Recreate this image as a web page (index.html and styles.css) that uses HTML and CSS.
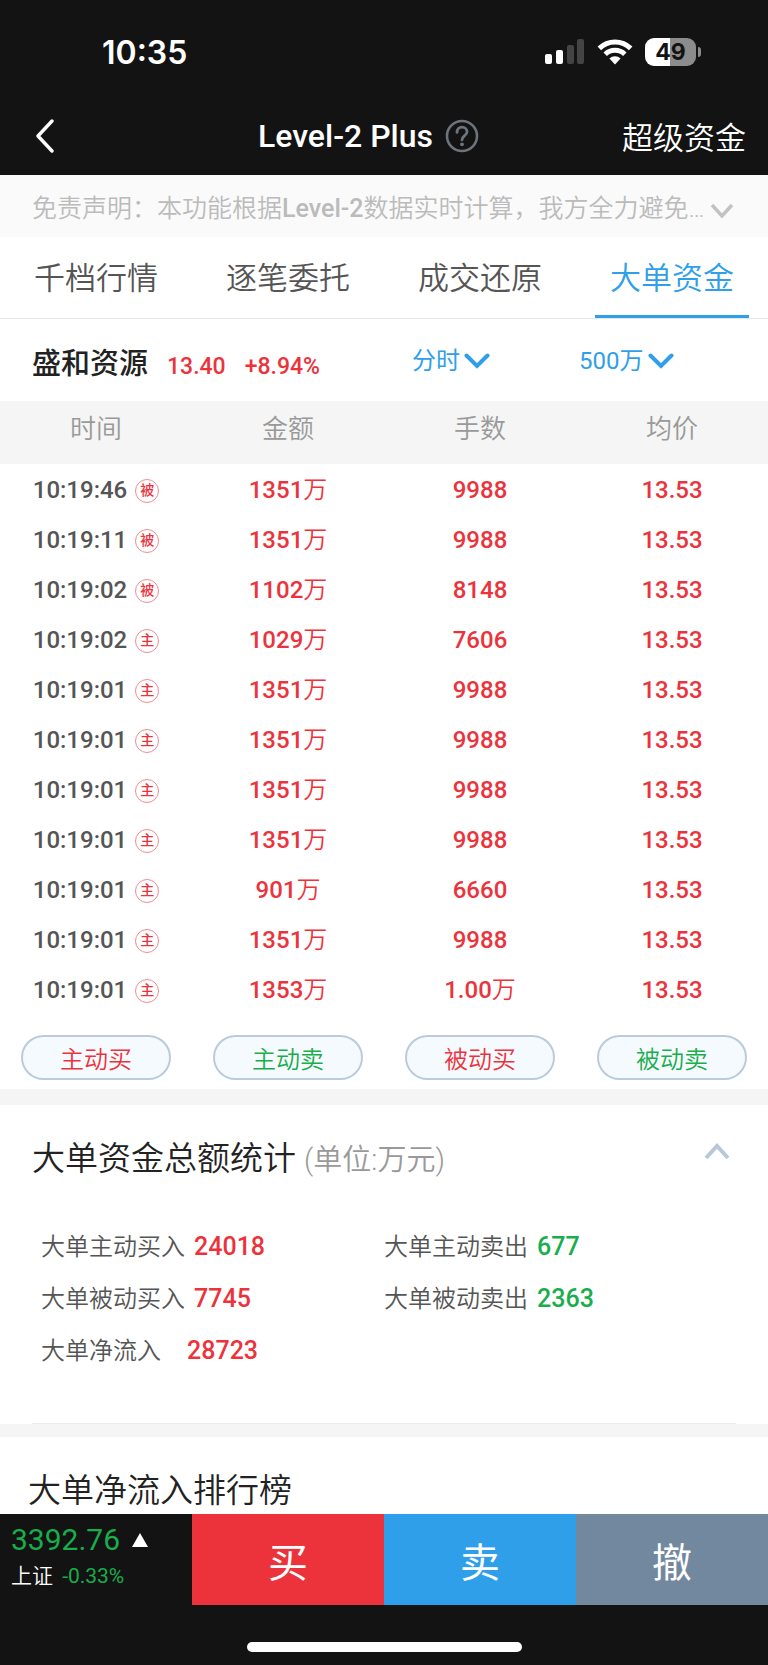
FILE: index.html
```html
<!DOCTYPE html>
<html lang="zh-CN">
<head>
  <meta charset="UTF-8">
  <meta name="viewport" content="width=device-width, initial-scale=1.0">
  <title>Level-2 Plus</title>
  <link rel="stylesheet" href="styles.css">
</head>
<body>
  <!-- 状态栏 -->
  <div class="status-bar">
    <span class="status-time">10:35</span>
    <div class="status-icons">
      <svg width="40" height="26" viewBox="0 0 40 26">
        <rect x="0" y="15" width="7" height="10" rx="2" fill="#fff"/>
        <rect x="11" y="11" width="7" height="14" rx="2" fill="#fff"/>
        <rect x="22" y="6" width="7" height="19" rx="2" fill="#444"/>
        <rect x="32" y="0" width="7" height="25" rx="2" fill="#444"/>
      </svg>
      <svg class="icon-wifi" width="36" height="26" viewBox="0 0 36 26">
        <g fill="none" stroke="#fff" stroke-width="5">
          <path d="M2.3 9.4a22.5 22.5 0 0 1 31.4 0"/>
          <path d="M8.2 15.2a14.2 14.2 0 0 1 19.6 0"/>
        </g>
        <path d="M12.4 19.6a8 8 0 0 1 11.2 0L18 25.4z" fill="#fff"/>
      </svg>
      <div class="battery">49</div>
    </div>
  </div>

  <div class="header">
    <button class="btn-back" aria-label="返回">
      <svg width="20" height="34" viewBox="0 0 20 34"><path d="M17 2L3 17l14 15" fill="none" stroke="#fff" stroke-width="3.4" stroke-linecap="round" stroke-linejoin="round"/></svg>
    </button>
    <h1 class="header-title">
      Level-2 Plus
      <svg width="34" height="34" viewBox="0 0 34 34" fill="none" stroke="#6c747d">
        <circle cx="17" cy="17" r="15" stroke-width="2.6"/>
        <path d="M12 13.400c0-3.200 2.200-5.200 5-5.200s5 2 5 4.700c0 3.700-5 3.900-5 8" stroke-width="2.800" stroke-linecap="round"/>
        <circle cx="17" cy="25.300" r="1.900" fill="#6c747d" stroke="none"/>
      </svg>
    </h1>
    <a class="header-link" href="#">超级资金</a>
  </div>

  <div class="main">
    <!-- 免责声明 -->
    <div class="notice">
      <p>免责声明：本功能根据<span class="num">Level-2</span>数据实时计算，我方全力避免…</p>
      <button class="btn-icon" aria-label="展开">
        <svg width="24" height="16" viewBox="0 0 24 16"><path d="M2 2l10 11L22 2" fill="none" stroke="#c2c2c2" stroke-width="3.500"/></svg>
      </button>
    </div>

    <div class="tabs">
      <a class="tab" href="#">千档行情</a>
      <a class="tab" href="#">逐笔委托</a>
      <a class="tab" href="#">成交还原</a>
      <a class="tab active" href="#">大单资金</a>
    </div>

    <!-- 股票及筛选 -->
    <div class="quote">
      <div class="quote-info">
        <h2 class="quote-name">盛和资源</h2>
        <span>13.40</span>
        <span>+8.94%</span>
      </div>
      <div class="filter">
        <select aria-label="时间范围">
          <option>分时</option>
          <option>全天</option>
        </select>
        <svg width="26" height="16" viewBox="0 0 26 16"><path d="M2.500 2.500L13 13 23.500 2.500" fill="none" stroke="#2f9fea" stroke-width="4" stroke-linecap="round"/></svg>
      </div>
      <div class="filter">
        <select aria-label="金额">
          <option>500万</option>
          <option>300万</option>
        </select>
        <svg width="26" height="16" viewBox="0 0 26 16"><path d="M2.500 2.500L13 13 23.500 2.500" fill="none" stroke="#2f9fea" stroke-width="4" stroke-linecap="round"/></svg>
      </div>
    </div>

    <table class="deal-table">
      <thead>
        <tr><th>时间</th><th>金额</th><th>手数</th><th>均价</th></tr>
      </thead>
      <tbody>
        <tr><td>10:19:46<span class="tag">被</span></td><td>1351<i>万</i></td><td>9988</td><td>13.53</td></tr>
        <tr><td>10:19:11<span class="tag">被</span></td><td>1351<i>万</i></td><td>9988</td><td>13.53</td></tr>
        <tr><td>10:19:02<span class="tag">被</span></td><td>1102<i>万</i></td><td>8148</td><td>13.53</td></tr>
        <tr><td>10:19:02<span class="tag">主</span></td><td>1029<i>万</i></td><td>7606</td><td>13.53</td></tr>
        <tr><td>10:19:01<span class="tag">主</span></td><td>1351<i>万</i></td><td>9988</td><td>13.53</td></tr>
        <tr><td>10:19:01<span class="tag">主</span></td><td>1351<i>万</i></td><td>9988</td><td>13.53</td></tr>
        <tr><td>10:19:01<span class="tag">主</span></td><td>1351<i>万</i></td><td>9988</td><td>13.53</td></tr>
        <tr><td>10:19:01<span class="tag">主</span></td><td>1351<i>万</i></td><td>9988</td><td>13.53</td></tr>
        <tr><td>10:19:01<span class="tag">主</span></td><td>901<i>万</i></td><td>6660</td><td>13.53</td></tr>
        <tr><td>10:19:01<span class="tag">主</span></td><td>1351<i>万</i></td><td>9988</td><td>13.53</td></tr>
        <tr><td>10:19:01<span class="tag">主</span></td><td>1353<i>万</i></td><td>1.00<i>万</i></td><td>13.53</td></tr>
      </tbody>
    </table>

    <div class="type-btns">
      <button class="btn-type red">主动买</button>
      <button class="btn-type green">主动卖</button>
      <button class="btn-type red">被动买</button>
      <button class="btn-type green">被动卖</button>
    </div>

    <!-- 总额统计 -->
    <div class="stats">
      <div class="stats-header">
        <h2 class="section-title">大单资金总额统计 <small>(单位:万元)</small></h2>
        <button class="btn-icon" aria-label="收起">
          <svg width="26" height="18" viewBox="0 0 26 18"><path d="M2 16L13 4l11 12" fill="none" stroke="#b9c8d9" stroke-width="4"/></svg>
        </button>
      </div>
      <div class="stats-list">
        <div>大单主动买入<b class="red">24018</b></div>
        <div>大单主动卖出<b class="green">677</b></div>
        <div>大单被动买入<b class="red">7745</b></div>
        <div>大单被动卖出<b class="green">2363</b></div>
        <div class="net">大单净流入<b class="red">28723</b></div>
      </div>
    </div>

    <div class="rank">
      <h2 class="section-title">大单净流入排行榜</h2>
    </div>
  </div>

  <!-- 底部交易栏 -->
  <div class="footer">
    <div class="trade-bar">
      <div class="index">
        <div class="index-value">3392.76
          <svg width="16" height="14" viewBox="0 0 16 14"><path d="M8 0l8 14H0z" fill="#fff"/></svg>
        </div>
        <div class="index-name">上证 <span class="green">-0.33%</span></div>
      </div>
      <button class="btn-trade buy">买</button>
      <button class="btn-trade sell">卖</button>
      <button class="btn-trade cancel">撤</button>
    </div>
    <div class="home-indicator"></div>
  </div>
</body>
</html>
```
FILE: styles.css
```css
* {
  box-sizing: border-box;
}
body {
  margin: 0;
  min-height: 100vh;
  display: flex;
  flex-direction: column;
  font-family: Roboto, "Noto Sans CJK SC", sans-serif;
  font-size: 24px;
  font-weight: 350;
  background: #fff;
  color: #555;
}
h1, h2, p {
  margin: 0;
  font-weight: 350;
}
a {
  color: inherit;
  text-decoration: none;
}
button, select {
  font: inherit;
  border: none;
  background: none;
  padding: 0;
  cursor: pointer;
}
svg {
  display: block;
  flex: none;
}
.red {
  color: #ec333c;
}
.green {
  color: #19ad4c;
}

/* 状态栏 */
.status-bar {
  display: flex;
  justify-content: space-between;
  align-items: center;
  height: 104px;
  padding: 0 67px 0 102px;
  background: #131313;
  color: #fff;
}
.status-time {
  font-family: Inter, sans-serif;
  font-size: 32px;
  font-weight: 600;
}
.status-icons {
  display: flex;
  align-items: center;
}
.icon-wifi {
  margin: 0 12px;
}
.battery {
  position: relative;
  width: 51px;
  height: 28px;
  margin-right: 5px;
  border-radius: 9px;
  background: linear-gradient(90deg, #fff 50%, #8c8c8c 50%);
  color: #131313;
  font: 700 23px/28px Inter, sans-serif;
  text-align: center;
}
.battery::after {
  content: "";
  position: absolute;
  left: 53px;
  top: 9px;
  width: 3px;
  height: 10px;
  border-radius: 0 4px 4px 0;
  background: #8c8c8c;
}

/* 标题栏 */
.header {
  display: grid;
  grid-template-columns: 1fr auto 1fr;
  align-items: center;
  height: 71px;
  padding: 0 22px 8px 35px;
  background: #131313;
  color: #fff;
}
.btn-back {
  justify-self: start;
}
.header-title {
  display: flex;
  align-items: center;
  gap: 12px;
  margin-right: 44px;
  font-size: 32px;
  font-weight: 500;
}
.header-link {
  justify-self: end;
  font-size: 31px;
}

.main {
  flex: 1;
}
.notice {
  display: flex;
  align-items: center;
  height: 62px;
  padding: 0 34px 0 32px;
  background: #fafafa;
  color: #bbb;
  font-size: 25px;
}
.notice p {
  flex: 1;
  overflow: hidden;
  white-space: nowrap;
}
.notice .num {
  font-weight: 500;
}
.notice .btn-icon {
  padding-top: 10px;
}

.tabs {
  display: grid;
  grid-template-columns: repeat(4, 1fr);
  height: 82px;
  border-bottom: 1px solid #e6e6e6;
}
.tab {
  margin: 0 19px;
  padding-top: 6px;
  border-bottom: 3px solid transparent;
  font-size: 31px;
  line-height: 72px;
  text-align: center;
  white-space: nowrap;
}
.tab.active {
  color: #2f9fea;
  border-color: #2f9fea;
}

/* 股票及筛选 */
.quote {
  display: flex;
  align-items: center;
  height: 82px;
  padding: 2px 22px 0 32px;
}
.quote-info {
  flex: 1;
  display: flex;
  align-items: baseline;
  gap: 19px;
  color: #ec333c;
  font-size: 23px;
  font-weight: 500;
}
.quote-name {
  color: #222;
  font-size: 29px;
  font-weight: 500;
}
.filter {
  display: flex;
  align-items: center;
  gap: 4px;
  width: 167px;
}
.filter select {
  appearance: none;
  color: #2f9fea;
  font-weight: 400;
}

/* 成交明细 */
.deal-table {
  width: 100%;
  table-layout: fixed;
  border-collapse: collapse;
}
.deal-table th {
  height: 63px;
  padding: 0 0 12px;
  background: #f5f5f5;
  color: #999;
  font-size: 26px;
  font-weight: 350;
}
.deal-table td {
  height: 50px;
  padding: 2px 0 0;
  color: #ec333c;
  font-weight: 500;
  line-height: 36px;
  text-align: center;
  white-space: nowrap;
}
.deal-table td:first-child {
  color: #555;
}
.deal-table i {
  font-style: normal;
  font-weight: 350;
}
.tag {
  display: inline-block;
  width: 24px;
  height: 24px;
  margin-left: 8px;
  border: 1px solid #f28b90;
  border-radius: 50%;
  color: #ec333c;
  font-size: 14px;
  line-height: 21px;
  vertical-align: 3px;
}

.type-btns {
  display: grid;
  grid-template-columns: repeat(4, 1fr);
  padding: 21px 0 9px;
}
.btn-type {
  height: 45px;
  margin: 0 21px;
  border: 2px solid #bccbdc;
  border-radius: 23px;
  background: #f5faff;
}

/* 总额统计 */
.stats {
  border-top: 16px solid #f5f5f5;
  border-bottom: 13px solid #f5f5f5;
  padding: 31px 32px 0;
}
.stats-header {
  display: flex;
  justify-content: space-between;
}
.stats-header .btn-icon {
  height: 30px;
  margin-right: 6px;
}
.section-title {
  color: #222;
  font-size: 33px;
  line-height: 46px;
}
.section-title small {
  color: #999;
  font-size: 29px;
}
.stats-list {
  display: grid;
  grid-template-columns: 1fr 1fr;
  padding: 38px 9px 46px;
  border-bottom: 1px solid #ebebeb;
  line-height: 52px;
}
.stats-list b {
  margin-left: 9px;
  font-size: 25px;
  font-weight: 500;
}
.stats-list .net b {
  margin-left: 26px;
}

.rank {
  padding: 31px 28px 0;
}

/* 底部交易栏 */
.footer {
  background: #131313;
  height: 152px;
}
.trade-bar {
  display: grid;
  grid-template-columns: repeat(4, 1fr);
  height: 91px;
}
.index {
  padding: 8px 0 0 11px;
}
.index-value {
  display: flex;
  align-items: center;
  gap: 12px;
  color: #19ad4c;
  font-size: 30px;
  font-weight: 400;
  line-height: 36px;
}
.index-name {
  color: #fff;
  font-size: 21px;
  line-height: 36px;
}
.index-name .green {
  margin-left: 4px;
  font-weight: 400;
}
.btn-trade {
  color: #fff;
  font-size: 40px;
  font-weight: 400;
}
.buy {
  background: #ec333c;
}
.sell {
  background: #2f9fea;
}
.cancel {
  background: #72889f;
}
.home-indicator {
  width: 275px;
  height: 10px;
  margin: 37px auto 0;
  border-radius: 5px;
  background: #fff;
}
```
